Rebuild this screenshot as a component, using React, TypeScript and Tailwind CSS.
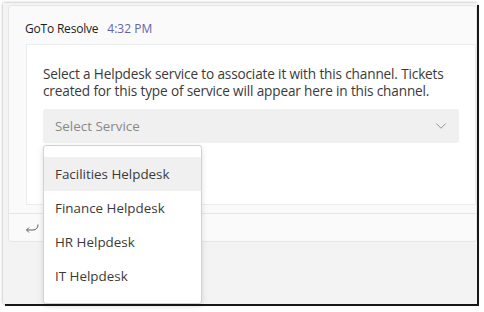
import { ChevronDown } from 'lucide-react';

const SERVICES = ['Facilities Helpdesk', 'Finance Helpdesk', 'HR Helpdesk', 'IT Helpdesk'];

export default function App() {
  return (
    <div className="h-[312px] w-[484px] overflow-hidden bg-white pl-[3px] pt-[3px] font-['Open_Sans',sans-serif] text-[#252423]">
      <div className="relative h-[301px] w-[474px] bg-[#f3f3f3] shadow-[2px_2px_0_rgba(0,0,0,0.9),0_0_3px_rgba(0,0,0,0.35)]">
        <div className="ml-[5px] pt-[2px]">
          <div className="rounded-[4px] border border-[#e6e6e6] bg-[#fafafa]">
            <div className="flex items-center gap-[9px] pl-[16px] pt-[14px] text-[12px]">
              <span className="font-medium tracking-[-0.2px] text-[#201f1e]">GoTo Resolve</span>
              <span className="text-[#6264a7]">4:32 PM</span>
            </div>

            <div className="ml-[17px] mt-[6px] h-[161px] border border-[#ececec] bg-white px-[16px] pt-[20px]">
              <p className="text-[13.6px] leading-[17px] tracking-[-0.15px] text-[#3b3a39]">
                Select a Helpdesk service to associate it with this channel. Tickets created for this type of service will appear here in this channel.
              </p>
              <div className="mt-[10px] flex h-[34px] items-center justify-between rounded-[2px] bg-[#f0f0f0] pl-[12px] pr-[9px]">
                <span className="text-[13.4px] text-[#8a8886]">Select Service</span>
                <ChevronDown className="h-[18px] w-[18px] text-[#8a8886]" strokeWidth={1.2} />
              </div>
            </div>

            <div className="mt-[8px] flex h-[28px] items-center border-t border-[#e6e6e6] pl-[16px]">
              <svg width="14" height="10" viewBox="0 0 14 10" fill="none" stroke="#616161" strokeWidth="1">
                <path d="M13 1.5 C13 5 11 7 8 7 H1.5" />
                <path d="M4 4.5 L1.5 7 L4 9.5" />
              </svg>
            </div>
          </div>
        </div>

        <div className="absolute left-[40px] top-[142px] w-[159px] rounded-[3px] border border-[#d1d1d1] bg-white pb-[10px] pt-[11px] shadow-[0_2px_6px_rgba(0,0,0,0.12)]">
          {SERVICES.map((service, index) => (
            <div
              key={service}
              className={`flex h-[34px] items-center pl-[11px] text-[13.4px] text-[#3b3a39] ${index === 0 ? 'bg-[#f0f0f0]' : ''}`}
            >
              {service}
            </div>
          ))}
        </div>
      </div>
    </div>
  );
}
